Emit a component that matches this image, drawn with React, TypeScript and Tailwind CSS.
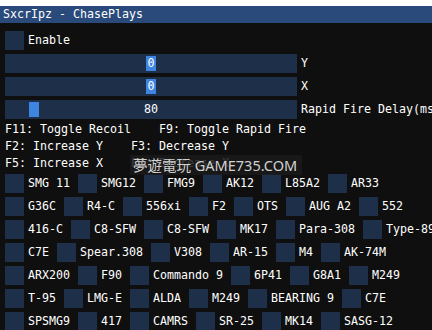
import React from "react";

const rows: string[][] = [
  ["SMG 11", "SMG12", "FMG9", "AK12", "L85A2", "AR33"],
  ["G36C", "R4-C", "556xi", "F2", "OTS", "AUG A2", "552"],
  ["416-C", "C8-SFW", "C8-SFW", "MK17", "Para-308", "Type-89"],
  ["C7E", "Spear.308", "V308", "AR-15", "M4", "AK-74M"],
  ["ARX200", "F90", "Commando 9", "6P41", "G8A1", "M249"],
  ["T-95", "LMG-E", "ALDA", "M249", "BEARING 9", "C7E"],
  ["SPSMG9", "417", "CAMRS", "SR-25", "MK14", "SASG-12"],
];

function Box() {
  return <div className="w-[19px] h-[19px] shrink-0 bg-[#1d2f49]" />;
}

function Check({ label }: { label: string }) {
  return (
    <div className="flex items-center shrink-0">
      <Box />
      <span className="ml-[4px] whitespace-pre">{label}</span>
    </div>
  );
}

function Slider({ value, grab, label }: { value: string; grab: number; label: string }) {
  return (
    <div className="flex items-center h-[19px]">
      <div className="relative w-[292px] h-[19px] shrink-0 bg-[#1d2f49]">
        <div
          className="absolute top-[2px] w-[10px] h-[15px] bg-[#3d85e0]"
          style={{ left: grab }}
        />
        <span className="absolute inset-0 flex items-center justify-center">{value}</span>
      </div>
      <span className="ml-[4px] whitespace-pre">{label}</span>
    </div>
  );
}

export default function App() {
  return (
    <div
      className="relative w-[432px] h-[330px] overflow-hidden bg-white text-white text-[11.63px] leading-[13px]"
      style={{ fontFamily: '"DejaVu Sans Mono", "Liberation Mono", monospace' }}
    >
      <div className="h-[6px]" />
      <div className="h-[324px] bg-[#0f0f0f]">
        <div className="h-[17px] bg-[#294a7a] px-[3px] flex items-center whitespace-pre">
          SxcrIpz - ChasePlays
        </div>
        <div className="pl-[5px] pt-[8px] flex flex-col gap-[4px] whitespace-nowrap">
          <Check label="Enable" />
          <Slider value="0" grab={141} label="Y" />
          <Slider value="0" grab={141} label="X" />
          <Slider value="80" grab={24} label="Rapid Fire Delay(ms)" />
          <div className="whitespace-pre">{"F11: Toggle Recoil    F9: Toggle Rapid Fire"}</div>
          <div className="whitespace-pre">{"F2: Increase Y    F3: Decrease Y"}</div>
          <div className="whitespace-pre">{"F5: Increase X    F6: Decrease X"}</div>
          {rows.map((r, i) => (
            <div key={i} className="flex gap-[8px]">
              {r.map((l, j) => (
                <Check key={j} label={l} />
              ))}
            </div>
          ))}
        </div>
      </div>
      <div
        className="absolute left-[130px] top-[155px] w-[172px] h-[20px] bg-[#1a1a1a]/85 flex items-center pl-[3px] text-[#d2d2d2] text-[14.5px] whitespace-pre"
        style={{ fontFamily: '"Noto Sans", "Noto Sans CJK SC", sans-serif' }}
      >
        夢遊電玩 GAME735.COM
      </div>
    </div>
  );
}
